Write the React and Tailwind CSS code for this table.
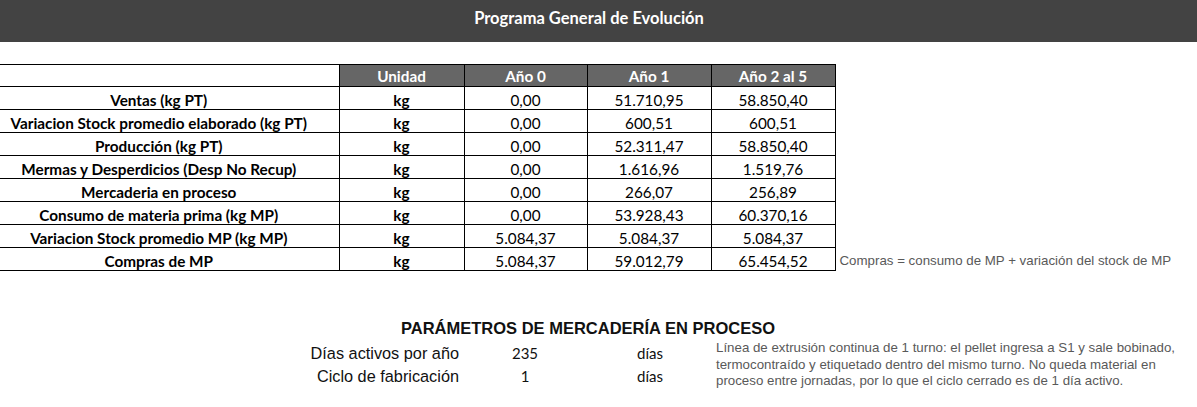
import React from 'react';

const rows = [
  ['Ventas (kg PT)', 'kg', '0,00', '51.710,95', '58.850,40'],
  ['Variacion Stock promedio elaborado (kg PT)', 'kg', '0,00', '600,51', '600,51'],
  ['Producción (kg PT)', 'kg', '0,00', '52.311,47', '58.850,40'],
  ['Mermas y Desperdicios (Desp No Recup)', 'kg', '0,00', '1.616,96', '1.519,76'],
  ['Mercaderia en proceso', 'kg', '0,00', '266,07', '256,89'],
  ['Consumo de materia prima (kg MP)', 'kg', '0,00', '53.928,43', '60.370,16'],
  ['Variacion Stock promedio MP (kg MP)', 'kg', '5.084,37', '5.084,37', '5.084,37'],
  ['Compras de MP', 'kg', '5.084,37', '59.012,79', '65.454,52'],
];

const params = [
  ['Días activos por año', '235', 'días'],
  ['Ciclo de fabricación', '1', 'días'],
];

export default function App() {
  return (
    <div className="w-[1197px] h-[407px] bg-white text-black overflow-hidden">
      {/* barra de título */}
      <div className="h-[42px] bg-[#434343] flex items-center">
        <div className="w-[1178px] text-center text-white font-bold text-[16.5px] pb-[6px]" style={{ fontFamily: 'Lato, "Open Sans", sans-serif' }}>
          Programa General de Evolución
        </div>
      </div>

      <div className="flex items-end mt-[22px]">
        <table className="border-collapse text-[15.3px]" style={{ fontFamily: 'Lato, "Open Sans", sans-serif' }}>
          <thead>
            <tr className="h-[22px]">
              <th className="w-[339px] border-t border-r border-black bg-white p-0"></th>
              <th className="w-[125px] border border-black bg-[#666666] text-white font-bold px-0 pb-0 pt-[2px] leading-none">Unidad</th>
              <th className="w-[123px] border border-black bg-[#666666] text-white font-bold px-0 pb-0 pt-[2px] leading-none">Año 0</th>
              <th className="w-[124px] border border-black bg-[#666666] text-white font-bold px-0 pb-0 pt-[2px] leading-none">Año 1</th>
              <th className="w-[124px] border border-black bg-[#666666] text-white font-bold px-0 pb-0 pt-[2px] leading-none">Año 2 al 5</th>
            </tr>
          </thead>
          <tbody>
            {rows.map((r) => (
              <tr key={r[0]} className="h-[23px]">
                <td className="border-t border-b border-r border-black text-center font-bold pb-0 pt-[5px] pl-0 pr-[21px] leading-none whitespace-nowrap">{r[0]}</td>
                <td className="border border-black text-center font-bold px-0 pb-0 pt-[5px] leading-none">{r[1]}</td>
                <td className="border border-black text-center px-0 pb-0 pt-[5px] leading-none">{r[2]}</td>
                <td className="border border-black text-center px-0 pb-0 pt-[5px] leading-none">{r[3]}</td>
                <td className="border border-black text-center px-0 pb-0 pt-[5px] leading-none">{r[4]}</td>
              </tr>
            ))}
          </tbody>
        </table>
        <div className="ml-[4px] mb-[2px] text-[13.3px] text-[#595959] leading-[16px] whitespace-nowrap" style={{ fontFamily: '"Liberation Sans", Arial, sans-serif' }}>
          Compras = consumo de MP + variación del stock de MP
        </div>
      </div>

      {/* parámetros */}
      <div className="mt-[48px]" style={{ fontFamily: '"Liberation Sans", Arial, sans-serif' }}>
        <div className="w-[1176px] text-center font-bold text-[16.5px] leading-[19px] text-[#111]">
          PARÁMETROS DE MERCADERÍA EN PROCESO
        </div>
        <div className="flex">
          <div className="flex flex-col pt-[4px]">
            {params.map((p) => (
              <div key={p[0]} className="flex h-[23px] items-center">
                <div className="w-[459px] text-right text-[16.3px] text-[#111]">{p[0]}</div>
                <div className="w-[132px] text-center text-[15px] text-[#111]" style={{ fontFamily: 'Lato, "Open Sans", sans-serif' }}>{p[1]}</div>
                <div className="w-[125px] pl-[46px] text-[15px] text-[#111]" style={{ fontFamily: 'Lato, "Open Sans", sans-serif' }}>{p[2]}</div>
              </div>
            ))}
          </div>
          <p className="w-[474px] pt-[2px] text-[13.3px] leading-[16.5px] text-[#595959]">
            Línea de extrusión continua de 1 turno: el pellet ingresa a S1 y sale bobinado, termocontraído y etiquetado dentro del mismo turno. No queda material en proceso entre jornadas, por lo que el ciclo cerrado es de 1 día activo.
          </p>
        </div>
      </div>
    </div>
  );
}
